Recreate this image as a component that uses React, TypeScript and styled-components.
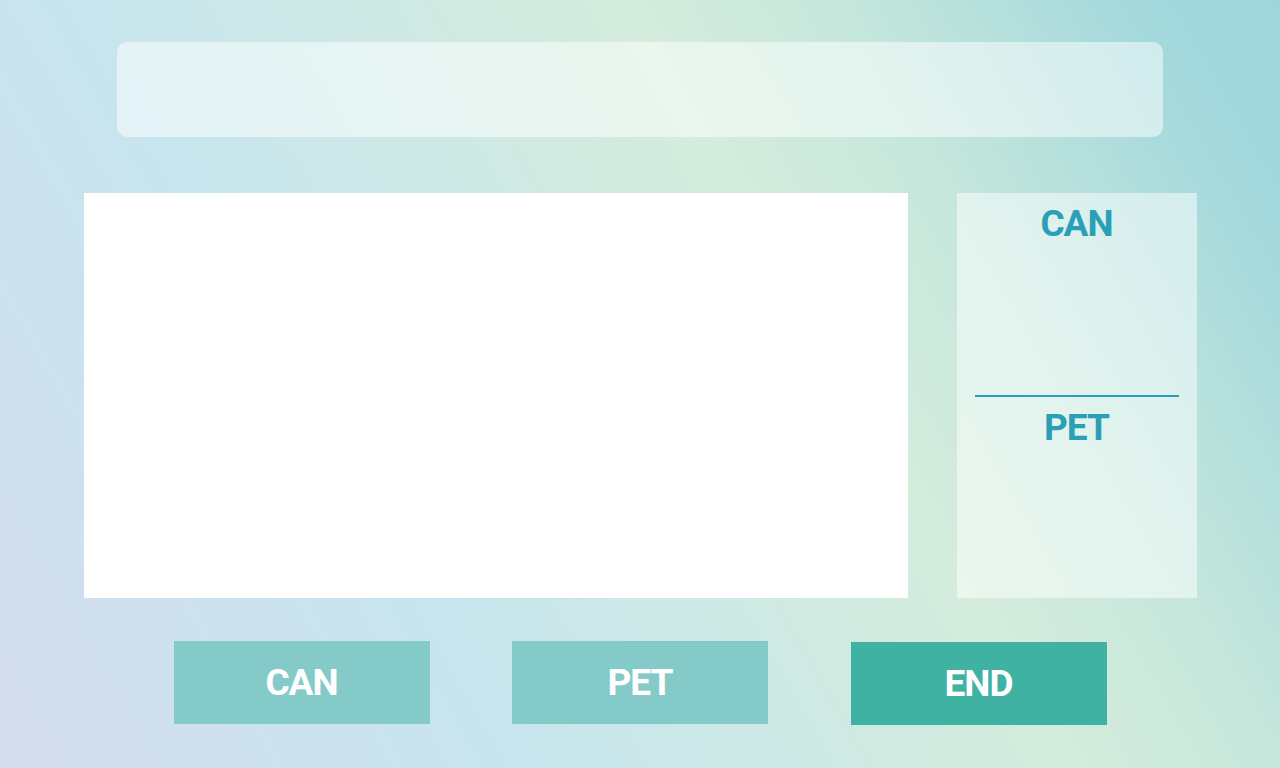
import React from "react";
import styled, { createGlobalStyle } from "styled-components";

const Global = createGlobalStyle`
  html, body { margin: 0; padding: 0; }
  body {
    width: 1280px;
    height: 768px;
    overflow: hidden;
    font-family: Roboto, "Noto Sans", sans-serif;
  }
`;

const Screen = styled.div`
  width: 1280px;
  height: 768px;
  box-sizing: border-box;
  display: flex;
  flex-direction: column;
  align-items: center;
  padding-top: 42px;
  background: linear-gradient(
    60deg,
    #d4dcee 0%,
    #c7e5ee 30%,
    #d4ecdc 62%,
    #c6e7dc 74%,
    #a3d8dc 92%,
    #9fd6dc 100%
  );
`;

const TopBar = styled.div`
  width: 1046px;
  height: 95px;
  border-radius: 10px;
  background: rgba(255, 255, 255, 0.5);
`;

const Middle = styled.div`
  margin-top: 56px;
  width: 1113px;
  height: 405px;
  display: flex;
  gap: 49px;
`;

const Canvas = styled.div`
  width: 824px;
  height: 100%;
  background: #ffffff;
`;

const Side = styled.div`
  flex: 1;
  display: flex;
  flex-direction: column;
  background: rgba(255, 255, 255, 0.5);
`;

const Section = styled.div`
  flex: 1;
  display: flex;
  flex-direction: column;
  align-items: center;
`;

const SideLabel = styled.div`
  color: #2aa0b6;
  font-size: 37px;
  font-weight: 700;
  line-height: 62px;
  letter-spacing: -1px;
`;

const Divider = styled.div`
  height: 2px;
  margin: 0 18px;
  background: #2aa0b6;
`;

const Buttons = styled.div`
  margin-top: 43px;
  display: flex;
  gap: 82.5px;
  align-items: flex-start;
`;

const Button = styled.button<{ $primary?: boolean }>`
  width: 256px;
  height: 83px;
  margin-top: ${(p) => (p.$primary ? "1px" : "0")};
  border: none;
  padding: 0;
  background: ${(p) => (p.$primary ? "#40b2a3" : "#84cac8")};
  color: #ffffff;
  font-family: Roboto, "Noto Sans", sans-serif;
  font-size: 37px;
  font-weight: 700;
  letter-spacing: -1px;
  cursor: pointer;
`;

export default function App() {
  return (
    <>
      <Global />
      <Screen>
        <TopBar />
        <Middle>
          <Canvas />
          <Side>
            <Section>
              <SideLabel>CAN</SideLabel>
            </Section>
            <Divider />
            <Section>
              <SideLabel>PET</SideLabel>
            </Section>
          </Side>
        </Middle>
        <Buttons>
          <Button>CAN</Button>
          <Button>PET</Button>
          <Button $primary>END</Button>
        </Buttons>
      </Screen>
    </>
  );
}
